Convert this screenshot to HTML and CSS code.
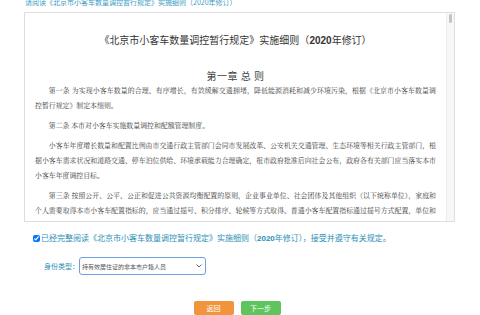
FILE: index.html
```html
<!DOCTYPE html>
<html>
<head>
  <meta charset="utf-8">
  <title>实施细则阅读</title>
  <link rel="stylesheet" href="styles.css">
</head>
<body>
  <div class="page">
    <p class="notice-title">请阅读《北京市小客车数量调控暂行规定》实施细则（2020年修订）</p>

    <div class="rules-box">
      <div class="rules-content">
        <h1 class="rules-title">《北京市小客车数量调控暂行规定》实施细则（<b>2020</b>年修订）</h1>
        <h2 class="chapter">第一章 总 则</h2>
        <p>第一条 为实现小客车数量的合理、有序增长，有效缓解交通拥堵，降低能源消耗和减少环境污染，根据《北京市小客车数量调控暂行规定》制定本细则。</p>
        <p>第二条 本市对小客车实施数量调控和配额管理制度。</p>
        <p>小客车年度增长数量和配置比例由市交通行政主管部门会同市发展改革、公安机关交通管理、生态环境等相关行政主管部门，根据小客车需求状况和道路交通、停车泊位供给、环境承载能力合理确定，报市政府批准后向社会公布，政府各有关部门应当落实本市小客车年度调控目标。</p>
        <p>第三条 按照公开、公平、公正和促进公共资源均衡配置的原则，企业事业单位、社会团体及其他组织（以下统称单位），家庭和个人需要取得本市小客车配置指标的，应当通过摇号、积分排序、轮候等方式取得。普通小客车配置指标通过摇号方式配置，单位和个人新能源小客车配置指标通过轮候方式配置，家庭新能源小客车配置指标通过积分排序方式配置。</p>
        <p>第四条 小客车配置指标分为普通小客车配置指标和新能源小客车配置指标。</p>
      </div>
      <div class="scrollbar"><div class="scroll-thumb"></div></div>
    </div>

    <p class="agree">
      <input type="checkbox" id="agree" checked><label for="agree">已经完整阅读《北京市小客车数量调控暂行规定》实施细则（<b>2020</b>年修订），接受并遵守有关规定。</label>
    </p>

    <div class="form-row">
      <label for="idType" class="field-label">身份类型：</label>
      <div class="select-wrap">
        <select id="idType" class="field-select">
          <option>持有效居住证的非本市户籍人员</option>
          <option>本市户籍人员</option>
        </select>
        <svg class="select-arrow" width="6" height="4" viewBox="0 0 6 4">
          <path d="M0.6 0.6 L3 3 L5.4 0.6" fill="none" stroke="#666" stroke-width="1"/>
        </svg>
      </div>
    </div>

    <div class="actions">
      <button class="btn btn-back">返回</button>
      <button class="btn btn-next">下一步</button>
    </div>
  </div>
</body>
</html>
```

FILE: styles.css
```css
body {
  margin: 0;
  background-color: #fff;
  font-family: "Noto Sans CJK SC", "Noto Sans", sans-serif;
  color: #333;
  overflow: hidden;
}
.page {
  width: 431px;
  padding: 0 25px 0 24px;
}
.notice-title {
  margin: -3px 0 0 1px;
  font-size: 7px;
  line-height: 10px;
  color: #3b9dc2;
}
.rules-box {
  display: flex;
  height: 210px;
  box-sizing: border-box;
  margin-top: 5px;
  border: 1px solid #dedede;
  background-color: #fff;
}
.rules-content {
  flex: 1;
  overflow: hidden;
  padding: 0 10px;
}
.rules-title {
  margin: 20px 0 0;
  font-size: 10px;
  line-height: 14px;
  font-weight: normal;
  text-align: center;
  color: #333;
}
.rules-title b {
  font-family: "Liberation Sans", sans-serif;
}
.chapter {
  margin: 21px 0 0;
  font-size: 10px;
  line-height: 14px;
  font-weight: normal;
  letter-spacing: 0.5px;
  text-align: center;
  color: #444;
}
.chapter + p {
  margin-top: 10px;
}
.rules-content p {
  margin: 0 0 5px;
  font-family: "Noto Serif CJK SC", "Noto Sans CJK SC", serif;
  font-size: 6.9px;
  line-height: 15px;
  text-indent: 2em;
  text-align: justify;
  color: #3a3a3a;
}
.scrollbar {
  width: 7px;
  background-color: #f7f7f7;
  border-left: 1px solid #ececec;
}
.scroll-thumb {
  width: 3px;
  height: 9px;
  margin: 1px auto 0;
  border-radius: 2px;
  background-color: #c3c3c3;
}
.agree {
  margin: 10px 0 0 9px;
  font-size: 8px;
  line-height: 12px;
  color: #2c8fb6;
}
.agree input {
  width: 7px;
  height: 7px;
  margin: 0 1px 0 0;
  vertical-align: -1px;
}
.agree b {
  font-family: "Liberation Sans", sans-serif;
}
.form-row {
  display: flex;
  align-items: center;
  margin: 12px 0 0 20px;
}
.field-label {
  width: 35px;
  font-size: 7px;
  color: #2c8fb6;
}
.select-wrap {
  position: relative;
  display: flex;
}
.field-select {
  width: 127px;
  height: 18px;
  padding: 0 2px;
  border: 1px solid #6c9fe4;
  border-radius: 3px;
  background-color: #fff;
  font-family: "Noto Sans CJK SC", sans-serif;
  font-size: 6px;
  color: #555;
  appearance: none;
  -webkit-appearance: none;
  outline: none;
}
.select-arrow {
  position: absolute;
  right: 4px;
  top: 7px;
  pointer-events: none;
}
.actions {
  display: flex;
  justify-content: center;
  gap: 7px;
  margin-top: 26px;
  padding-right: 5px;
}
.btn {
  width: 40px;
  height: 14px;
  padding: 0;
  border: none;
  border-radius: 2px;
  font-family: "Noto Sans CJK SC", sans-serif;
  font-size: 7px;
  color: #fff;
  cursor: pointer;
}
.btn-back {
  background-color: #f1953c;
}
.btn-next {
  background-color: #5dc45e;
}
```
